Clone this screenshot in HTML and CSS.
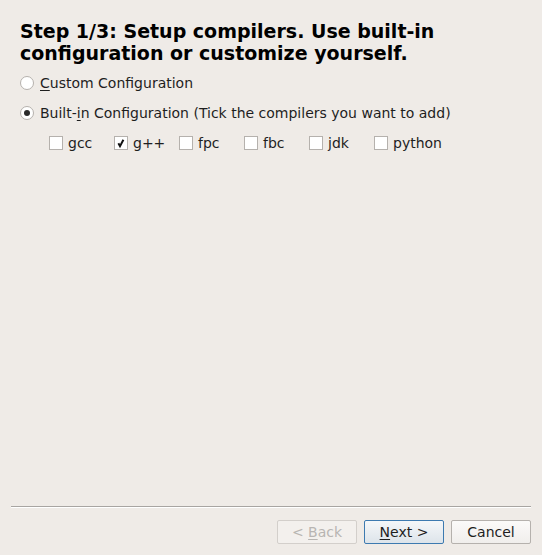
FILE: index.html
```html
<!DOCTYPE html>
<html>
<head>
<meta charset="utf-8">
<link rel="stylesheet" href="styles.css">
</head>
<body>
<div class="dialog">
  <div class="content">
    <h1 class="title">Step 1/3: Setup compilers. Use built-in configuration or customize yourself.</h1>
    <div class="option">
      <span class="radio"></span>
      <span class="label"><u>C</u>ustom Configuration</span>
    </div>
    <div class="option">
      <span class="radio checked"></span>
      <span class="label">Built-<u>i</u>n Configuration (Tick the compilers you want to add)</span>
    </div>
    <div class="compilers">
      <div class="check-item"><span class="box"></span><span class="label">gcc</span></div>
      <div class="check-item"><span class="box checked"><svg width="12" height="12" viewBox="0 0 12 12"><path d="M3.4 6.3 L5 9.2 L8.4 2.8" fill="none" stroke="#111" stroke-width="2" stroke-linecap="butt" stroke-linejoin="miter"/></svg></span><span class="label">g++</span></div>
      <div class="check-item"><span class="box"></span><span class="label">fpc</span></div>
      <div class="check-item"><span class="box"></span><span class="label">fbc</span></div>
      <div class="check-item"><span class="box"></span><span class="label">jdk</span></div>
      <div class="check-item"><span class="box"></span><span class="label">python</span></div>
    </div>
  </div>
  <div class="footer">
    <div class="separator"></div>
    <div class="buttons">
      <button class="btn disabled">&lt; <u>B</u>ack</button>
      <button class="btn default"><u>N</u>ext &gt;</button>
      <button class="btn">Cancel</button>
    </div>
  </div>
</div>
</body>
</html>
```
FILE: styles.css
```css
html, body {
  margin: 0;
  padding: 0;
  height: 100%;
}
body {
  background: #efebe7;
  font-family: "DejaVu Sans", sans-serif;
  font-size: 14px;
  color: #1e1e1e;
}
.dialog {
  height: 555px;
  display: flex;
  flex-direction: column;
  box-sizing: border-box;
}
.content {
  flex: 1;
  padding: 20px 20px 0 20px;
}
.title {
  margin: 0 0 11px 0;
  font-size: 19px;
  font-weight: bold;
  line-height: 22px;
  color: #000;
  width: 500px;
}
.option {
  display: flex;
  align-items: center;
  height: 16px;
  margin-bottom: 14px;
}
.radio {
  width: 12px;
  height: 12px;
  border: 1px solid #b5b1ad;
  border-radius: 50%;
  background: #fff;
  margin-right: 6px;
  position: relative;
  flex: none;
}
.radio.checked::after {
  content: "";
  position: absolute;
  left: 3px;
  top: 3px;
  width: 6px;
  height: 6px;
  border-radius: 50%;
  background: #2a2a2a;
}
.label u, .btn u {
  text-decoration: underline;
  text-underline-offset: 2px;
}
.compilers {
  display: grid;
  grid-template-columns: repeat(6, 65px);
  padding-left: 29px;
}
.check-item {
  display: flex;
  align-items: center;
  height: 16px;
}
.box {
  width: 12px;
  height: 12px;
  border: 1px solid #b5b1ad;
  background: #fff;
  margin-right: 5px;
  flex: none;
  display: flex;
}
.footer {
  padding: 0 11px 11px 11px;
}
.separator {
  border-top: 1px solid #a8a5a2;
  border-bottom: 1px solid #fff;
  margin-bottom: 12px;
}
.buttons {
  display: flex;
  justify-content: flex-end;
  gap: 7px;
}
.btn {
  width: 80px;
  height: 24px;
  font-family: "DejaVu Sans", sans-serif;
  font-size: 14px;
  border: 1px solid #b5b1ad;
  border-radius: 2px;
  background: linear-gradient(#fbfaf9, #f0eeec);
  color: #1e1e1e;
  padding: 0;
}
.btn.disabled {
  color: #b8b5b2;
  border-color: #d3cfcb;
  background: #f3f0ed;
}
.btn.default {
  border-color: #3d7ab0;
  background: linear-gradient(#f5f7f9, #dde4ea);
}
```
